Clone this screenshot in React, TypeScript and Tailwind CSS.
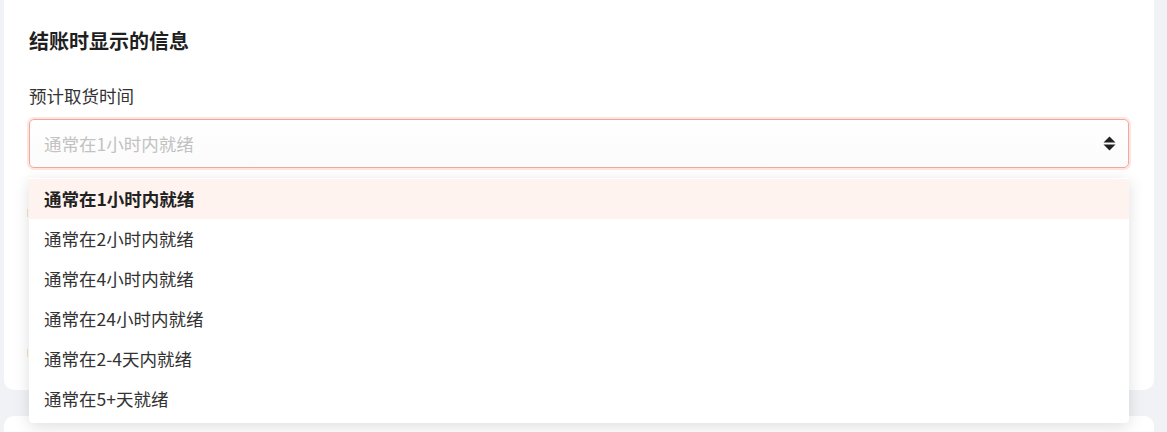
import * as React from "react";

const options = [
  "通常在1小时内就绪",
  "通常在2小时内就绪",
  "通常在4小时内就绪",
  "通常在24小时内就绪",
  "通常在2-4天内就绪",
  "通常在5+天就绪",
];

function SortArrows() {
  return (
    <svg width="13" height="15" viewBox="0 0 13 15" className="text-[#222]" fill="currentColor">
      <path d="M6.5 0.5L12.5 6.5H0.5Z" />
      <path d="M6.5 14.5L0.5 8.5H12.5Z" />
    </svg>
  );
}

export default function App() {
  const [selected] = React.useState(0);

  return (
    <div className="h-[432px] w-full overflow-hidden bg-[#f1f2f5] font-['Noto_Sans_CJK_SC','Noto_Sans',sans-serif]">
      <div className="ml-1 mt-[-8px] h-[398px] w-[1150px] rounded-[10px] bg-white px-[25px] pt-[35px]">
        <h2 className="text-[20px] font-bold leading-[28px] text-[#1f1f1f]">结账时显示的信息</h2>
        <label className="mt-[28px] block text-[17.5px] leading-[26px] text-[#333]">预计取货时间</label>

        <div className="relative mt-[10px] w-[1100px]">
          <div className="flex h-[49px] items-center justify-between rounded-[5px] border border-[#f3a69c] bg-gradient-to-b from-white to-[#fbfbfb] pl-[14px] pr-[12px] shadow-[0_0_0_2px_#fde6e2]">
            <span className="text-[17.5px] leading-[26px] text-[#c2c2c2]">通常在1小时内就绪</span>
            <SortArrows />
          </div>

          <div className="flex flex-col">
            <span className="ml-[-2px] mt-[41px] h-[8px] w-[1px] bg-[#f9e2b4]" />
            <span className="ml-[-2px] mt-[132px] h-[8px] w-[1px] bg-[#f9e2b4]" />
          </div>

          <ul className="absolute left-0 top-[59px] z-10 w-[1100px] rounded-b-[4px] bg-white pb-[4px] pt-[1px] shadow-[0_4px_16px_rgba(0,0,0,0.13)]">
            {options.map((o, i) => (
              <li
                key={o}
                className={
                  i === selected
                    ? "flex h-[40px] items-center bg-[#fff3ef] px-[15px] text-[17.5px] font-bold text-[#222]"
                    : "flex h-[40px] items-center px-[15px] text-[17.5px] text-[#333]"
                }
              >
                {o}
              </li>
            ))}
          </ul>
        </div>
      </div>

      <div className="ml-1 mt-[26px] h-[40px] w-[1150px] rounded-[10px] bg-white" />
    </div>
  );
}
